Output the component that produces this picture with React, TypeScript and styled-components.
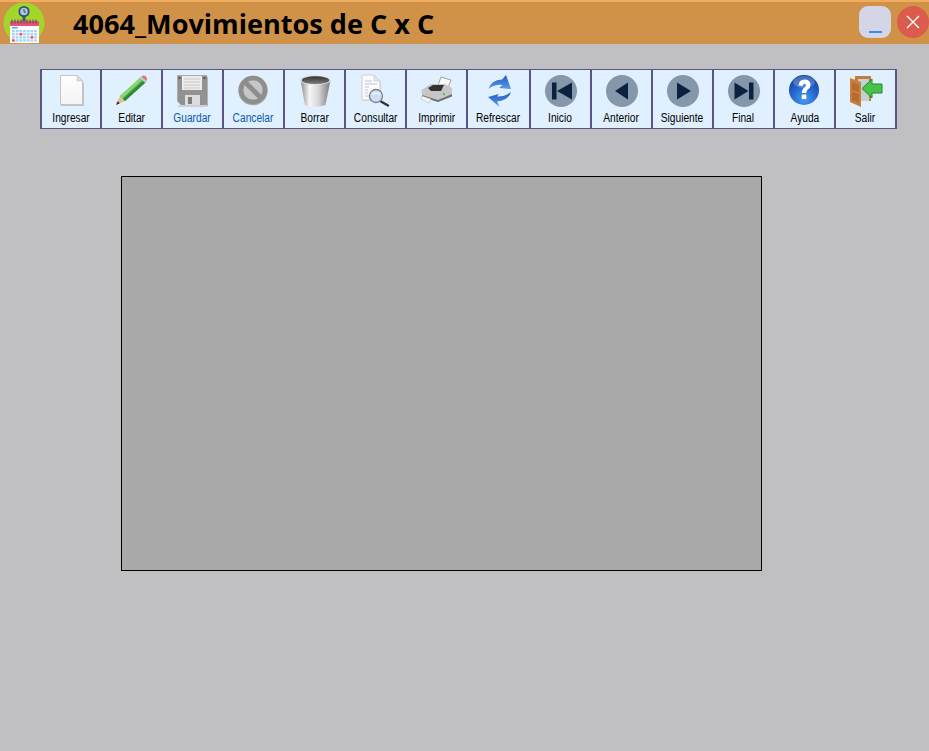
import React from 'react';
import styled, { createGlobalStyle } from 'styled-components';

const GlobalStyle = createGlobalStyle`
  html, body {
    margin: 0;
    padding: 0;
    background: #c0c0c2;
    font-family: "Liberation Sans", Arial, sans-serif;
  }
`

const lineColor = "#5a5488"

const Page = styled.div`
  width: 929px;
  height: 751px;
  overflow: hidden;
  background: #c0c0c2;
`

const TitleBar = styled.div`
  height: 42px;
  display: flex;
  align-items: center;
  background: #d09248;
  border-top: 2px solid #f0ab5c;
`

const LogoBox = styled.div`
  width: 73px;
  height: 42px;
  flex-shrink: 0;
  padding-left: 3px;
  box-sizing: border-box;
`

const Title = styled.div`
  flex: 1;
  font-family: "Open Sans", sans-serif;
  font-weight: 700;
  font-size: 27.1px;
  color: #000;
  white-space: nowrap;
`

const WindowButtons = styled.div`
  display: flex;
  align-items: center;
  gap: 6px;
  margin-top: -2px;
`

const MinimizeButton = styled.div`
  width: 32px;
  height: 32px;
  border-radius: 9px;
  background: #d4d5e6;
  display: flex;
  align-items: flex-end;
  justify-content: center;
  padding-bottom: 5px;
  box-sizing: border-box;
`

const MinimizeBar = styled.div`
  width: 13px;
  height: 2px;
  background: #3a8cf0;
`

const CloseButton = styled.div`
  width: 32px;
  height: 32px;
  border-radius: 50%;
  background: #db5b4c;
  display: flex;
  align-items: center;
  justify-content: center;
`

const Toolbar = styled.div`
  display: flex;
  width: max-content;
  margin: 25px 0 0 40px;
  border: solid ${lineColor};
  border-width: 1px 0 1px 2px;
`

const ToolButton = styled.div<{ $inner: number; $disabled?: boolean }>`
  width: ${p => p.$inner}px;
  height: 58px;
  display: flex;
  flex-direction: column;
  align-items: center;
  background: #e0f0ff;
  border-right: 2px solid ${lineColor};
  color: ${p => (p.$disabled ? '#0b5aa8' : '#000')};
`

const IconSlot = styled.div`
  height: 34px;
  margin-top: 3px;
  svg { display: block; }
`

const Label = styled.div`
  margin-top: 5px;
  font-size: 12px;
  line-height: 13px;
  white-space: nowrap;
  transform: scaleX(0.85);
`

const Panel = styled.div`
  width: 639px;
  height: 393px;
  margin: 47px 0 0 121px;
  background: #a9a9a9;
  border: 1px solid #000;
`

const Svg = ({ children }: { children: React.ReactNode }) => (
  <svg width="34" height="34" viewBox="0 0 34 34">{children}</svg>
)

const AppLogo = () => (
  <svg width="44" height="42" viewBox="0 0 44 42">
    <circle cx="21" cy="21" r="20.5" fill="#a3d62b" />
    <rect x="19.5" y="12" width="3" height="7" fill="#3f5f6b" />
    <circle cx="21" cy="9.5" r="5.6" fill="#35506b" />
    <circle cx="21" cy="9.5" r="3.8" fill="#a9c9ec" />
    <path d="M21 7V10H23" stroke="#35506b" fill="none" />
    <rect x="7" y="19" width="29" height="5" rx="1" fill="#e8507a" />
    <rect x="7" y="24" width="29" height="17" fill="#fff" />
    {[9, 12, 15, 18, 21, 24, 27, 30, 33].map(x => (
      <rect key={x} x={x - 0.5} y="17.5" width="1" height="4" fill="#44505c" />
    ))}
    <rect x="9" y="25" width="6" height="1.5" fill="#55aaee" />
    {[0, 1, 2, 3].map(r =>
      [0, 1, 2, 3, 4, 5, 6].map(c => (
        <rect
          key={`${r}-${c}`}
          x={9 + c * 3.7}
          y={28 + r * 3.1}
          width="2.8"
          height="2.3"
          fill={(r === 1 && c === 2) || (r === 2 && c === 5) || (r === 3 && c === 0) ? '#f0445a' : '#a4d4f6'}
        />
      ))
    )}
  </svg>
)

const PageIcon = () => (
  <Svg>
    <defs>
      <linearGradient id="pg" x1="0" y1="0" x2="0" y2="1">
        <stop offset="0" stopColor="#ffffff" />
        <stop offset="1" stopColor="#f3f3f3" />
      </linearGradient>
    </defs>
    <path d="M7 3H23L30 10V33H7Z" fill="#9a9a9a" opacity="0.5" />
    <path d="M6.5 2.5H23L28.5 8V31.5H6.5Z" fill="url(#pg)" stroke="#c4c4c4" />
    <path d="M23 2.5V8H28.5Z" fill="#dcdcdc" stroke="#c0c0c0" strokeWidth="0.6" />
  </Svg>
)

const PencilIcon = () => (
  <Svg>
    <path d="M1 32L5 23L10 28Z" fill="#e3c08e" />
    <path d="M1 32L2.7 28.2L4.8 30.3Z" fill="#2c2c2c" />
    <path d="M5 23L26 4L31 9L10 28Z" fill="#58b84c" />
    <path d="M5 23L26 4L28 6L7 25.5Z" fill="#8ad672" />
    <path d="M8 26L29 7L31 9L10 28Z" fill="#2f8a35" />
    <path d="M26 4L28 2.5Q29.5 2 31 3.5Q32.5 5 32 6.5L31 9Z" fill="#e07a80" />
    <path d="M25 5L26.5 3.7L31.7 8.5L30.3 10Z" fill="#c9c9c9" />
  </Svg>
)

const FloppyIcon = () => (
  <Svg>
    <path d="M1 2H31V32H5L1 28Z" fill="#929292" />
    <path d="M1 2H31V3H2V28H1Z" fill="#ababab" />
    <path d="M6 3H26V17H6Z" fill="#ececec" />
    <path d="M8 6H24M8 9H24M8 12H24M8 15H24" stroke="#c8c8c8" />
    <rect x="2.5" y="4" width="2" height="2" fill="#555" />
    <rect x="27.5" y="4" width="2" height="2" fill="#555" />
    <rect x="9" y="22" width="15" height="10" fill="#dcdcdc" />
    <rect x="12" y="24" width="4" height="7" fill="#7d7d7d" />
    <path d="M2 33H31.5V4" stroke="#b4b4b4" fill="none" />
  </Svg>
)

const CancelIcon = () => (
  <Svg>
    <circle cx="16" cy="17.5" r="14.8" fill="#adadad" />
    <circle cx="16" cy="17" r="10" fill="#c6c6c6" />
    <circle cx="16" cy="17" r="12" fill="none" stroke="#8e8e8e" strokeWidth="4.5" />
    <path d="M8 9L24 25" stroke="#8e8e8e" strokeWidth="5" />
  </Svg>
)

const TrashIcon = () => (
  <Svg>
    <defs>
      <linearGradient id="tr" x1="0" y1="0" x2="1" y2="0">
        <stop offset="0" stopColor="#8a8a8a" />
        <stop offset="0.3" stopColor="#f6f6f6" />
        <stop offset="0.6" stopColor="#d6d6d6" />
        <stop offset="1" stopColor="#7a7a7a" />
      </linearGradient>
      <linearGradient id="trin" x1="0" y1="0" x2="0" y2="1">
        <stop offset="0" stopColor="#333" />
        <stop offset="1" stopColor="#7c7c7c" />
      </linearGradient>
    </defs>
    <path d="M2.5 7L7 32Q18 35.5 27.5 32L32.5 7Z" fill="url(#tr)" />
    <ellipse cx="17.5" cy="7" rx="15.5" ry="5" fill="#e2e2e2" />
    <ellipse cx="17.5" cy="7.2" rx="13.8" ry="3.9" fill="url(#trin)" />
  </Svg>
)

const ConsultIcon = () => (
  <Svg>
    <path d="M4 3H16L22 9V28H4Z" fill="#aaa" opacity="0.4" />
    <path d="M3 2H15L21 8V27H3Z" fill="#fbfbfb" stroke="#cfcfcf" />
    <path d="M15 2V8H21Z" fill="#dfe6ee" stroke="#c0c8d0" strokeWidth="0.6" />
    <path d="M6 8H13M6 11H18M6 14H10M6 17H9M6 20H9M6 23H10" stroke="#b4c6d8" />
    <path d="M22 28.5L29 32.5" stroke="#333" strokeWidth="2.4" strokeLinecap="round" />
    <circle cx="17" cy="23" r="6.5" fill="#cddef2" stroke="#75828e" strokeWidth="1.3" />
    <path d="M13 21.5Q17 18.5 21 21.5" stroke="#f4f8fd" fill="none" strokeWidth="1.4" />
  </Svg>
)

const PrinterIcon = () => (
  <Svg>
    <path d="M17 15L21 4L31 7L27 17Z" fill="#f9f9f9" stroke="#8a8a8a" strokeWidth="0.8" />
    <path d="M1.5 17L11 11H25L32 15V21L18 27L2 22Z" fill="#c6c6c6" />
    <path d="M8 15L13 12H24L21 18H11Z" fill="#333" />
    <path d="M2 22L18 27L32 21V23.5L18 29L2 24Z" fill="#6d6d6d" />
    <path d="M2 23L11 26L9 30L1 26Z" fill="#f6f6f6" stroke="#a8a8a8" strokeWidth="0.5" />
    <circle cx="24" cy="21" r="1.2" fill="#52c060" />
  </Svg>
)

const RefreshIcon = () => (
  <Svg>
    <defs>
      <linearGradient id="rf" x1="0" y1="0" x2="0" y2="1">
        <stop offset="0" stopColor="#1f5cc0" />
        <stop offset="1" stopColor="#5c9ae8" />
      </linearGradient>
    </defs>
    <path d="M6.5 16Q9 7 20 6.5L24 2L29 16L17 15L20.5 12Q13 11 6.5 16Z" fill="url(#rf)" />
    <path d="M29 19Q26 28 15 28.5L17.5 34L6 24L17 21L15 23.5Q22 24 29 19Z" fill="url(#rf)" />
  </Svg>
)

type NavKind = 'first' | 'prev' | 'next' | 'last'

const NavIcon = ({ kind }: { kind: NavKind }) => (
  <Svg>
    <circle cx="17" cy="18" r="16" fill="#8597aa" />
    {kind === 'first' && <path d="M8 9.5H12.5V26.5H8ZM28 9.5V26.5L13 18Z" fill="#0a2240" />}
    {kind === 'prev' && <path d="M23 9.5V26.5L10 18Z" fill="#0a2240" />}
    {kind === 'next' && <path d="M11 9.5V26.5L25 18Z" fill="#0a2240" />}
    {kind === 'last' && <path d="M7.5 9.5V26.5L21.5 18ZM22 9.5H26.5V26.5H22Z" fill="#0a2240" />}
  </Svg>
)

const HelpIcon = () => (
  <Svg>
    <defs>
      <radialGradient id="hp" cx="0.5" cy="0.8" r="0.8">
        <stop offset="0" stopColor="#4a9cf0" />
        <stop offset="0.6" stopColor="#1f5fc8" />
        <stop offset="1" stopColor="#123f9a" />
      </radialGradient>
    </defs>
    <circle cx="16" cy="17" r="15" fill="url(#hp)" />
    <ellipse cx="16" cy="9" rx="11" ry="6" fill="#fff" opacity="0.22" />
    <path
      d="M10.5 12.5Q11 6.5 16.5 6.5Q22.5 6.5 22.5 12Q22.5 15 19.5 16.7Q18.3 17.5 18.3 20H13.8Q13.8 16 16.5 14.5Q18 13.5 18 12.3Q18 10.7 16.3 10.7Q15 10.7 14.8 13Z"
      fill="#fff"
    />
    <rect x="13.8" y="21.5" width="4.5" height="4.5" rx="0.5" fill="#fff" />
  </Svg>
)

const ExitIcon = () => (
  <Svg>
    <path d="M6 3H22V28H6Z" fill="#c3d0d4" />
    <path d="M6 3H22V28H20V6H9V28H6Z" fill="#c8783a" />
    <path d="M1 5L12 9V34L1 29Z" fill="#cb7d3e" />
    <path d="M3 9L10 12V19L3 16.5ZM3 19L10 21.5V30L3 27Z" fill="#b56c30" />
    <path d="M13 15.5L23 6V11H33V20H23V25Z" fill="#49c24a" stroke="#1c8a28" />
  </Svg>
)

interface IToolItem {
  label: string
  icon: React.ReactNode
  inner: number
  disabled?: boolean
}

const tools: IToolItem[] = [
  { label: 'Ingresar', icon: <PageIcon />, inner: 58 },
  { label: 'Editar', icon: <PencilIcon />, inner: 59 },
  { label: 'Guardar', icon: <FloppyIcon />, inner: 59, disabled: true },
  { label: 'Cancelar', icon: <CancelIcon />, inner: 59, disabled: true },
  { label: 'Borrar', icon: <TrashIcon />, inner: 59 },
  { label: 'Consultar', icon: <ConsultIcon />, inner: 59 },
  { label: 'Imprimir', icon: <PrinterIcon />, inner: 59 },
  { label: 'Refrescar', icon: <RefreshIcon />, inner: 61 },
  { label: 'Inicio', icon: <NavIcon kind="first" />, inner: 59 },
  { label: 'Anterior', icon: <NavIcon kind="prev" />, inner: 59 },
  { label: 'Siguiente', icon: <NavIcon kind="next" />, inner: 59 },
  { label: 'Final', icon: <NavIcon kind="last" />, inner: 59 },
  { label: 'Ayuda', icon: <HelpIcon />, inner: 59 },
  { label: 'Salir', icon: <ExitIcon />, inner: 59 },
]

function App() {
  return (
    <Page>
      <GlobalStyle />
      <TitleBar>
        <LogoBox><AppLogo /></LogoBox>
        <Title>4064_Movimientos de C x C</Title>
        <WindowButtons>
          <MinimizeButton><MinimizeBar /></MinimizeButton>
          <CloseButton>
            <svg width="16" height="16" viewBox="0 0 16 16">
              <path d="M2 2L14 14M14 2L2 14" stroke="#fff" strokeWidth="1.4" />
            </svg>
          </CloseButton>
        </WindowButtons>
      </TitleBar>
      <Toolbar>
        {tools.map(t => (
          <ToolButton key={t.label} $inner={t.inner} $disabled={t.disabled}>
            <IconSlot>{t.icon}</IconSlot>
            <Label>{t.label}</Label>
          </ToolButton>
        ))}
      </Toolbar>
      <Panel />
    </Page>
  );
}

export default App;
